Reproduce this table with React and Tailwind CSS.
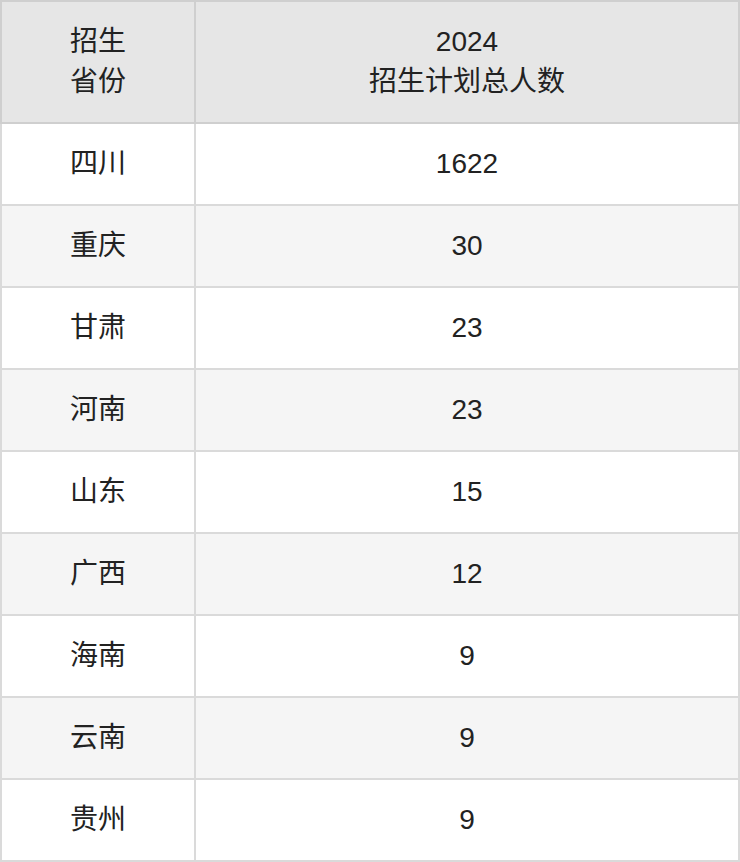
import React from 'react';

const rows = [
  { province: '四川', count: '1622' },
  { province: '重庆', count: '30' },
  { province: '甘肃', count: '23' },
  { province: '河南', count: '23' },
  { province: '山东', count: '15' },
  { province: '广西', count: '12' },
  { province: '海南', count: '9' },
  { province: '云南', count: '9' },
  { province: '贵州', count: '9' },
];

export default function App() {
  return (
    <div
      className="w-[740px] bg-white text-[#222222] text-[28px] leading-[40px]"
      style={{ fontFamily: '"Liberation Sans", "Noto Sans CJK SC", sans-serif' }}
    >
      <table className="w-full border-collapse border-2 border-[#d9d9d9] table-fixed">
        <colgroup>
          <col className="w-[194px]" />
          <col />
        </colgroup>
        <thead>
          <tr className="bg-[#e6e6e6] h-[122px]">
            <th className="border-2 border-[#cfcfcf] font-normal text-center align-middle">
              招生
              <br />
              省份
            </th>
            <th className="border-2 border-[#cfcfcf] font-normal text-center align-middle">
              2024
              <br />
              招生计划总人数
            </th>
          </tr>
        </thead>
        <tbody>
          {rows.map((row, i) => (
            <tr key={row.province} className={`h-[82px] ${i % 2 === 1 ? 'bg-[#f5f5f5]' : 'bg-white'}`}>
              <td className="border-2 border-[#dadada] text-center align-middle">{row.province}</td>
              <td className="border-2 border-[#dadada] text-center align-middle">{row.count}</td>
            </tr>
          ))}
        </tbody>
      </table>
    </div>
  );
}
